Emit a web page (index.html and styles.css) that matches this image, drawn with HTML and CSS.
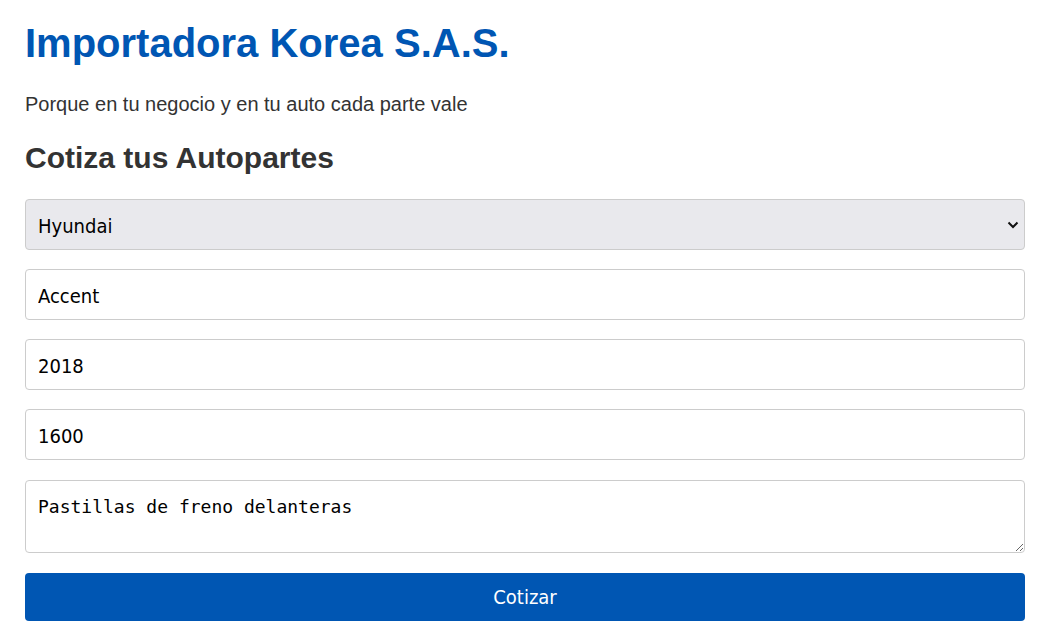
FILE: index.html
```html
<!DOCTYPE html>
<html lang="es">
<head>
<meta charset="utf-8">
<title>Importadora Korea S.A.S.</title>
<link rel="stylesheet" href="styles.css">
</head>
<body>
<main class="page">
  <h1 class="brand">Importadora Korea S.A.S.</h1>
  <p class="tagline">Porque en tu negocio y en tu auto cada parte vale</p>
  <h2 class="section-title">Cotiza tus Autopartes</h2>
  <form class="quote-form">
    <div class="select-wrap">
      <select class="field field-select">
        <option>Hyundai</option>
        <option>Kia</option>
      </select>
      <svg class="chevron" width="12" height="8" viewBox="0 0 12 8" aria-hidden="true">
        <path d="M1.5 1.5 L6 6 L10.5 1.5" fill="none" stroke="#111" stroke-width="2"/>
      </svg>
    </div>
    <input class="field" type="text" value="Accent">
    <input class="field" type="text" value="2018">
    <input class="field" type="text" value="1600">
    <textarea class="field field-area">Pastillas de freno delanteras
</textarea>
    <button class="submit" type="button">Cotizar</button>
  </form>
</main>
</body>
</html>
```
FILE: styles.css
```css
html, body {
  margin: 0;
  padding: 0;
  background: #ffffff;
}

.page {
  max-width: 1000px;
  padding: 20px 25px 20px 25px;
  font-family: "Liberation Sans", Arial, sans-serif;
}

.brand {
  margin: 0;
  font-size: 40px;
  line-height: 46px;
  font-weight: bold;
  color: #0056b3;
}

.tagline {
  margin: 27px 0 0 0;
  font-size: 20px;
  line-height: 23px;
  color: #333333;
}

.section-title {
  margin: 24px 0 0 0;
  font-size: 30px;
  line-height: 35px;
  font-weight: bold;
  color: #333333;
}

.quote-form {
  margin-top: 24px;
  display: flex;
  flex-direction: column;
  gap: 19px;
}

.select-wrap {
  position: relative;
}

.field {
  display: block;
  box-sizing: border-box;
  width: 100%;
  height: 51px;
  margin: 0;
  padding: 3px 12px 0 12px;
  border: 1px solid #cccccc;
  border-radius: 4px;
  background: #ffffff;
  color: #000000;
  font-family: "DejaVu Sans", sans-serif;
  font-stretch: semi-condensed;
  font-size: 20px;
  outline: none;
}

.field-select {
  appearance: none;
  -webkit-appearance: none;
  background: #e9e9ed;
}

.chevron {
  position: absolute;
  right: 6px;
  top: 22px;
  pointer-events: none;
}

.field-area {
  height: 73px;
  margin-top: 1px;
  padding: 14px 12px 0 12px;
  font-family: "DejaVu Sans Mono", monospace;
  font-stretch: normal;
  font-size: 18px;
  line-height: 24px;
  resize: vertical;
}

.submit {
  display: block;
  width: 100%;
  height: 48px;
  margin: 1px 0 0 0;
  padding: 0;
  border: none;
  border-radius: 4px;
  background: #0056b3;
  color: #ffffff;
  font-family: "DejaVu Sans", sans-serif;
  font-stretch: semi-condensed;
  font-size: 20px;
  cursor: pointer;
}
```
